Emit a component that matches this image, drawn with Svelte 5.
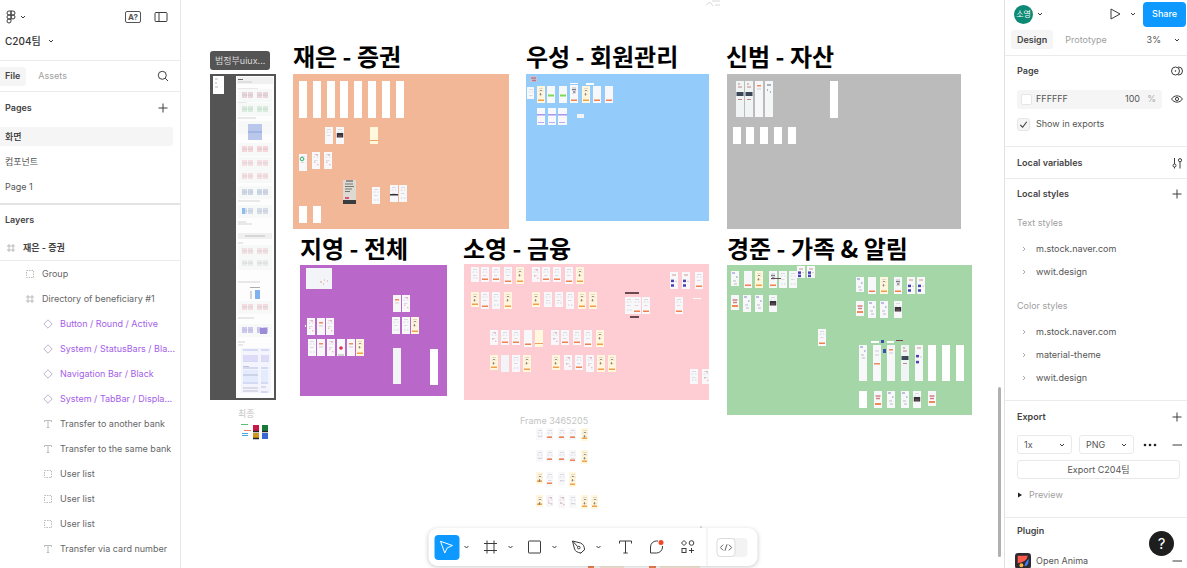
<script>
  const PAN = 181;

  // Thumbnails are "kind x y [w h]"; width and height default to one phone screen.
  const parse = (list) =>
    list.trim().split(/\s*;\s*/).filter(Boolean).map((entry) => {
      const [kind, x, y, w = 8, h = 17] = entry.split(' ');
      return { kind, x: +x, y: +y, w: +w, h: +h };
    });

  const boards = [
    { title: '재은 - 증권', tx: 293, ty: 39, x: 293, y: 74, w: 216, h: 155, fill: '#f2b796',
      cards: parse(`w 299 81 8 37;w 313 81 8 37;w 327 81 8 37;w 340 81 8 37;w 354 81 8 37;w 368 81 8 37;w 382 81 8 37;w 396 81 8 37;
        p 325 127;k 336 127;c 370 127;n 299 154;r 312 152;r 324 152;d 343 180 13 24;g 372 187;m 390 185;g 399 185;w 299 206;w 313 206`) },
    { title: '우성 - 회원관리', tx: 526, ty: 39, x: 526, y: 74, w: 183, h: 147, fill: '#93cbfa',
      cards: parse(`i 530 76 7 6;p 527 87 7 12;y 537 86;e 547 86;e 559 86;w 570 83 8 1;w 586 83 8 2;h 570 85 8 18;y 582 86;q 593 86;q 605 86;
        v 537 108;v 548 108;v 558 108 9 17;l 577 114 7 4`) },
    { title: '신범 - 자산', tx: 726, ty: 39, x: 727, y: 74, w: 234, h: 155, fill: '#bbbbbb',
      cards: parse(`a 736 81 8 36;a 745 81 8 36;t 755 81 8 36;f 765 81 8 36;w 830 81 8 37;w 733 127;w 746 127;w 760 127;w 774 127;w 788 127`) },
    { title: '지영 - 전체', tx: 300, ty: 231, x: 300, y: 265, w: 147, h: 131, fill: '#b967c9',
      cards: parse(`l 306 268 26 21;t 393 295;r 402 295;g 392 317;g 402 317;y 411 317;w 305 325 1 2;r 307 318;t 317 318;r 326 318;
        g 308 339;t 317 339;r 327 339;z 337 339;t 347 339;y 356 339;l 393 348 8 36;w 430 349 8 36`) },
    { title: '소영 - 금융', tx: 463, ty: 231, x: 464, y: 264, w: 245, h: 136, fill: '#fecdd3',
      cards: parse(`g 471 267 8 15;o 481 267 8 15;o 492 267 8 15;o 504 267;y 516 267;r 532 267 8 15;o 542 267 8 15;o 553 267 8 15;o 565 267;y 576 267;
        y 471 292 8 15;o 481 292;g 492 292;y 504 292;y 532 292 8 15;g 544 292 8 15;g 555 292 8 15;g 566 292;y 578 292;y 589 292;
        r 490 330 8 15;o 501 330 8 15;o 512 330 8 15;q 524 330;c 535 330;r 551 330 8 15;o 561 330 8 15;o 573 330 8 15;o 584 330;y 596 330;
        y 490 355 8 15;l 501 355;g 512 355;y 523 355;y 552 355 8 15;r 564 355 8 15;o 575 355 8 15;r 586 355;y 597 355;y 608 355;
        b 670 272;b 682 272;o 695 272;o 675 297;g 625 297;o 633 297;o 642 297;x 625 292 14 2;x 630 316 9 2;w 693 298 8 1;g 690 369 8 15;r 702 369 8 15`) },
    { title: '경준 - 가족 & 알림', tx: 727, ty: 231, x: 727, y: 265, w: 245, h: 150, fill: '#a5d6a7',
      cards: parse(`u 731 271 8 15;q 744 271;y 755 271;h 769 271;g 779 271;g 789 271;b 797 266 8 12;b 807 266 8 12;x 771 278 10 1;
        s 731 295 8 15;u 743 295;u 755 295;k 769 295;u 856 277 8 15;q 868 277;y 880 277;h 894 277;b 907 277;b 917 277;
        s 856 301 8 15;u 868 301;u 880 301;k 894 301;o 818 329;w 871 341 8 2;b 881 340 3 3;w 887 341 7 2;x 896 340 7 1;
        u 859 345 8 36;j 873 345 8 36;t 887 345 8 36;a 901 345 8 36;b 915 345 8 36;w 928 345 8 36;w 942 345 8 36;w 956 345 8 36;b 883 349 3 4;
        w 859 391;s 874 391;u 887 391;u 901 391;k 913 391;s 928 391 8 15`) }
  ];

  const loose = parse(`g 536 428 7 12;o 546 428 7 12;o 558 428 7 12;o 569 428 7 12;y 581 428 7 13;
    g 536 450 7 12;o 546 450 7 12;o 558 450 7 12;o 569 450 7 13;y 581 450 7 14;
    y 536 472 7 12;o 546 472 7 14;g 558 472 7 13;y 569 472 7 15;
    y 536 495 7 12;r 546 495 7 12;r 558 495 7 13;g 569 495 7 13;y 581 495 7 14;y 591 495 7 14`);

  const docs = [
    { y: 92, c: '#e9d5da' }, { y: 106, c: '#d9eddc' }, { y: 124, c: '#b9c8ea', tall: true },
    { y: 146, c: '#f5d6d9' }, { y: 160, c: '#f5dfe2' }, { y: 173, c: '#f5dfe2' },
    { y: 189, c: '#cfd9e4' }, { y: 208, c: '#d6dde8' }, { y: 248, c: '#f3e2e4' },
    { y: 260, c: '#e9edea' }, { y: 304, c: '#f3dde1' }, { y: 327, c: '#cfc8ee' }
  ];

  const pages = ['화면', '컴포넌트', 'Page 1'];
  const layers = [
    ['group', 'Group', 1], ['frame', 'Directory of beneficiary #1', 1],
    ['inst', 'Button / Round / Active', 2], ['inst', 'System / StatusBars / Bla...', 2],
    ['inst', 'Navigation Bar / Black', 2], ['inst', 'System / TabBar / Displa...', 2],
    ['text', 'Transfer to another bank', 2], ['text', 'Transfer to the same bank', 2],
    ['group', 'User list', 2], ['group', 'User list', 2], ['group', 'User list', 2],
    ['text', 'Transfer via card number', 2]
  ];
  const textStyles = ['m.stock.naver.com', 'wwit.design'];
  const colorStyles = ['m.stock.naver.com', 'material-theme', 'wwit.design'];

  const bg = { y: '#fff6dc', c: '#fff8dc', l: '#f3f4f8', d: '#dcdad2', a: '#f1f4f5', t: '#f7f7f9', f: '#f4f6f7', x: '#6a4850', i: '#c9c4d4' };
  const base = (k) => bg[k] ?? (k === 'w' ? '#ffffff' : '#f8f8fa');
</script>

{#snippet chevron()}
  <svg class="chev" viewBox="0 0 8 8" aria-hidden="true"><path d="M2 3l2 2 2-2" /></svg>
{/snippet}

{#snippet plus()}
  <svg class="ic" viewBox="0 0 12 12" aria-hidden="true"><path d="M6 1.5v9M1.5 6h9" /></svg>
{/snippet}

{#snippet thumb(c)}
  {@const k = c.kind}
  <g transform="translate({c.x} {c.y})">
    <rect width={c.w} height={c.h} fill={base(k)} />
    {#if 'goryhpkmn'.includes(k)}
      <path d="M2 2.5h4M1.5 5h2M5 5h1.5M2 8.5h3.5" stroke="#8c90a0" stroke-width="0.7" opacity="0.4" />
    {/if}
    {#if k === 'g'}<path d="M2 {c.h - 4}h1.5M5 {c.h - 4}h1.5" stroke="#a9acb8" stroke-width="0.7" opacity="0.7" />{/if}
    {#if 'oyqh'.includes(k)}<rect x="1" y={c.h - 3.5} width={c.w - 2} height="1.5" fill={k === 'y' ? '#f0a04a' : '#f08050'} />{/if}
    {#if k === 'c'}<rect y={c.h - 4} width={c.w} height="1" fill="#f0a060" />{/if}
    {#if k === 'y'}<path d="M3 4.5h2M3.5 7v2.400" stroke="#50404a" stroke-width="1.2" opacity="0.55" />{/if}
    {#if k === 'h'}<path d="M2 4.5h4M3 7h2.5" stroke="#303040" stroke-width="1.3" opacity="0.6" />{/if}
    {#if k === 'r'}<path d="M4 3h2M2 {c.h * 0.6}h1.500M5 {c.h * 0.75}h1.500" stroke="#e06070" stroke-width="1" opacity="0.55" />{/if}
    {#if k === 's'}<path d="M1.500 5h5M2 7.500h4" stroke="#c05a60" stroke-width="1.500" opacity="0.75" /><rect x="1" y={c.h - 5} width="6" height="2" fill="#f08a55" />{/if}
    {#if k === 'z'}<circle cx="4" cy="9" r="1.800" fill="#d83050" /><path d="M1 16h6" stroke="#7a9a80" stroke-width="0.7" />{/if}
    {#if k === 'i'}<path d="M1 2h5M2 4.500h4" stroke="#a85a70" stroke-width="1.500" opacity="0.7" />{/if}
    {#if k === 'k'}<rect x="0.8" y="6" width="6.400" height="4.500" fill="#33353a" /><path d="M2 9h4" stroke="#b0585a" stroke-width="0.8" />{/if}
    {#if k === 'm'}<rect y="9" width="8" height="1.5" fill="#333" />{/if}
    {#if k === 'n'}<circle cx="3" cy="5" r="1.8" fill="none" stroke="#35b070" />{/if}
    {#if k === 'e'}<rect x="1" y="8.500" width="6" height="2" fill="#7ed957" />{/if}
    {#if k === 'v'}<rect y="6" width={c.w} height="1.500" fill="#8f7ee8" opacity="0.8" /><path d="M1 14.5h6" stroke="#9a8cf0" opacity="0.7" />{/if}
    {#if k === 'a'}<rect x="0.5" y="11" width="7" height="4" fill="#3b4656" /><path d="M2 3h2M2 6h4M2 18.500h4" stroke="#b0706a" stroke-width="0.8" />{/if}
    {#if k === 't'}<rect x="2" y="4" width="4" height="1.5" fill="#f08a60" /><path d="M2 8h4" stroke="#b8bcc8" stroke-width="0.7" />{/if}
    {#if k === 'j'}<rect x="1" y="18" width="6" height="1.5" fill="#f08a60" /><path d="M2 6h4M2 10h4" stroke="#b8bcc8" stroke-width="0.7" />{/if}
    {#if k === 'f'}<path d="M2 4h4M2 9h1M5 11h1" stroke="#6a6e78" />{/if}
    {#if k === 'u'}<path d="M1 2h3M5 6h1.5" stroke="#3c48b8" stroke-width="1.2" opacity="0.65" /><path d="M2 10h3M3 13h3" stroke="#a0a4b0" stroke-width="0.7" />{/if}
    {#if k === 'b' && c.w > 5}
      {@const span = Math.min(c.h, 22)}
      <rect x="1" y={span * 0.45} width="3" height="2.500" fill="#4a42b4" /><rect x="1" y={span * 0.72} width="3" height="2.500" fill="#4a42b4" />
      <path d="M2 3h4M5.500 {span * 0.55}h1" stroke="#c08078" stroke-width="0.8" />
    {:else if k === 'b'}<rect width={c.w} height={c.h} fill="#3a50a8" />{/if}
    {#if k === 'd'}
      <rect y="20" width="13" height="4" fill="#3a3c3e" /><path d="M3 1h7" stroke="#444" /><path d="M2 4h8M2 6.500h9M2 9h7M2 11.500h5" stroke="#77756f" stroke-width="1.2" />
      <rect x="2" y="17" width="4" height="2" fill="#e05070" />
    {/if}
    {#if k === 'l' && c.w > 9}<path d="M14 14h2M18 12h1M17 16h1M21 13h1" stroke="#e09a9a" />{/if}
  </g>
{/snippet}

{#snippet layerIcon(type)}
  <svg class="licon" viewBox="0 0 10 10" aria-hidden="true">
    {#if type === 'frame'}<path d="M3 1v8M7 1v8M1 3h8M1 7h8" />
    {:else if type === 'group'}<rect x="1.5" y="1.500" width="7" height="7" stroke-dasharray="1.500 1" />
    {:else if type === 'inst'}<path d="M5 .8L9.200 5 5 9.200.8 5z" />
    {:else}<path d="M1.500 3V1.500h7V3M5 1.500v7M3.700 8.500h2.600" />{/if}
  </svg>
{/snippet}

<div class="app">
  <aside class="left">
    <header class="file-head">
      <div class="row">
        <button class="bare logo" aria-label="Main menu">
          <svg class="figma" viewBox="0 0 10 14" aria-hidden="true">
            <path d="M5 1H3a2 2 0 000 4h2zM5 1h2a2 2 0 010 4H5zM5 5H3a2 2 0 000 4h2zM5 9H3a2 2 0 102 2z" /><circle cx="7" cy="7" r="2" />
          </svg>
          {@render chevron()}
        </button>
        <span class="grow"></span>
        <button class="bare missing" aria-label="Missing fonts">A?</button>
        <button class="bare" aria-label="Toggle panel">
          <svg class="ic14" viewBox="0 0 14 14" aria-hidden="true"><rect x="1" y="2.500" width="12" height="9" rx="1" /><path d="M5 2.500v9" /></svg>
        </button>
      </div>
      <button class="bare title">C204팀 {@render chevron()}</button>
    </header>
    <div class="tabs">
      <button class="tab on">File</button>
      <button class="tab">Assets</button>
      <span class="grow"></span>
      <button class="bare" aria-label="Search">
        <svg class="ic" viewBox="0 0 12 12" aria-hidden="true"><circle cx="5.300" cy="5.300" r="4" /><path d="M8.300 8.300L11 11" /></svg>
      </button>
    </div>
    <section class="pages">
      <div class="head"><h2>Pages</h2><button class="bare" aria-label="Add page">{@render plus()}</button></div>
      {#each pages as name, i}
        <button class="page" class:on={i === 0}><span>{name}</span></button>
      {/each}
    </section>
    <section class="layers">
      <h2>Layers</h2>
      <button class="layer root">{@render layerIcon('frame')}<span>재은 - 증권</span></button>
      {#each layers as [type, name, depth]}
        <button class="layer" class:deep={depth === 2} class:inst={type === 'inst'}>{@render layerIcon(type)}<span>{name}</span></button>
      {/each}
    </section>
  </aside>

  <main class="canvas">
    <svg class="sheet" viewBox="{PAN} 0 822 568" width="822" height="568" aria-hidden="true">
      <path d="M706 5l4-3 3 4M712 1h8M715 5h5" stroke="#d8d8d8" fill="none" />
      <path d="M701 526v3" stroke="#bbb" />
      <path d="M588 567h6M649 567h7" stroke="#f08050" stroke-width="2" /><path d="M600 567h24M660 567h40" stroke="#f5d8b8" stroke-width="1" />
      <rect x="210" y="74" width="66" height="326" fill="#545454" />
      <rect x="213" y="76" width="11" height="18" fill="#fff" />
      <path d="M215 79h3M215 83h2M215 87h3" stroke="#999" stroke-width="0.7" />
      <rect x="236" y="76" width="38" height="322" fill="#fdfdfd" />
      <rect x="237" y="77" width="36" height="7" fill="#f0f0f0" />
      <path d="M238 79.500h5" stroke="#666" /><path d="M238 82h14M238 89h20M238 103h9M238 118h18M238 187h10M238 201h22M238 222h8M238 224h14M238 243h5M238 282h22M238 318h16M238 342h7M238 345h5" stroke="#bbb" stroke-width="0.6" />
      {#each docs as d}
        <rect x="238" y={d.y - 3} width="34" height="13" fill="#f7f8f8" />
        {#if d.tall}
          <rect x="248" y={d.y} width="14" height="16" fill={d.c} /><path d="M248 {d.y + 8}h14" stroke="#8da4dc" />
        {:else}
          <path d="M242 {d.y + 3}h11M257 {d.y + 3}h11" stroke={d.c} stroke-width="6" stroke-dasharray="5 1" />
          <path d="M242 {d.y + 3}h11M257 {d.y + 3}h11" stroke="#9a9fb0" stroke-width="0.5" opacity="0.5" />
        {/if}
      {/each}
      <rect x="238" y="233" width="34" height="6" fill="#f0f0f0" /><path d="M245 236h20" stroke="#aaa" stroke-width="0.7" />
      <rect x="242" y="208" width="3" height="6" fill="#8bbcf5" />
      <path d="M250 287.500h10M251 291v8" stroke="#888" stroke-width="0.7" />
      <rect x="255" y="290" width="5" height="9" fill="#7fb0f0" />
      <rect x="260" y="328" width="7" height="6" fill="#9b8bd8" />
      <rect x="241" y="348" width="30" height="45" fill="#f4f5fc" />
      <path d="M243 350h15M261 350h8M243 361h15M261 361h8M243 368h15M261 368h7M243 383h15M261 383h7M261 392h7" stroke="#b6bfec" />
      <path d="M243 358h15M261 358h8" stroke="#dcdcf8" stroke-width="6" /><path d="M243 376h15M261 376h7" stroke="#e4ebfc" stroke-width="12" />
      <path d="M243 366.500h6M243 375h15M243 388h15M261 387h5M243 391h15" stroke="#9aa0b8" stroke-width="0.6" />
      <path d="M241 424.500h7" stroke="#58c070" /><path d="M244 430.500h7" stroke="#f08060" /><path d="M242 433.500h6M242 435.500h6" stroke="#48a8e0" />
      <rect x="253" y="425" width="6" height="7" fill="#c81848" /><rect x="262" y="425" width="6" height="7" fill="#187838" />
      <rect x="253" y="433" width="6" height="6" fill="#d09820" /><rect x="262" y="433" width="6" height="6" fill="#3868d0" />
      <path d="M253 431.500h6M262 431.500h6M253 438.500h6" stroke="#202820" stroke-width="1.500" />
      {#each loose as c}{@render thumb(c)}{/each}
    </svg>

    <span class="tag" style:left="{210 - PAN}px" style:top="51px">범정부uiux...</span>
    <span class="note kr" style:left="{238 - PAN}px" style:top="406px">최종</span>
    <span class="note" style:left="{520 - PAN}px" style:top="413px">Frame 3465205</span>

    {#each boards as b}
      <h3 style:left="{b.tx - PAN}px" style:top="{b.ty}px">{b.title}</h3>
      <svg class="board" style:left="{b.x - PAN}px" style:top="{b.y}px" style:background={b.fill}
        width={b.w} height={b.h} viewBox="{b.x} {b.y} {b.w} {b.h}" role="img" aria-label={b.title}>
        {#each b.cards as c}{@render thumb(c)}{/each}
      </svg>
    {/each}

    <div class="scroll"></div>

    <div class="toolbar" role="toolbar" aria-label="Tools">
      <button class="tool on" aria-label="Move">
        <svg viewBox="0 0 16 16" aria-hidden="true"><path d="M2 2.300l12 4.200-5.200 2.300L6.300 14z" /></svg>
      </button>
      <button class="more" aria-label="Move options">{@render chevron()}</button>
      <button class="tool" aria-label="Frame"><svg viewBox="0 0 16 16" aria-hidden="true"><path d="M4.500 1.500v13M11.500 1.500v13M1.500 4.500h13M1.500 11.500h13" /></svg></button>
      <button class="more" aria-label="Frame options">{@render chevron()}</button>
      <button class="tool" aria-label="Rectangle"><svg viewBox="0 0 16 16" aria-hidden="true"><rect x="2" y="2" width="12" height="12" rx="0.500" /></svg></button>
      <button class="more" aria-label="Shape options">{@render chevron()}</button>
      <button class="tool" aria-label="Pen">
        <svg viewBox="0 0 16 16" aria-hidden="true"><path d="M2 2l8 2c3 1.200 4 4 4 6.500L10.500 14C7 13.500 5 12.500 4 10zM2 2l5.200 5.600M14.500 10.200L10 14.500" /><circle cx="8.300" cy="8.600" r="1.300" /></svg>
      </button>
      <button class="more" aria-label="Pen options">{@render chevron()}</button>
      <button class="tool wide" aria-label="Text"><svg viewBox="0 0 16 16" aria-hidden="true"><path d="M2 4.500v-2.500h12v2.500M8 2v12M5.800 14h4.400" /></svg></button>
      <button class="tool wide" aria-label="Comment">
        <svg viewBox="0 0 16 16" aria-hidden="true"><path d="M9.500 2H8a6 6 0 00-6 6v6h6a6 6 0 006-6V7" /><circle cx="12.500" cy="3.500" r="2.500" class="alert" /></svg>
      </button>
      <button class="tool wide" aria-label="Actions">
        <svg viewBox="0 0 16 16" aria-hidden="true"><path d="M4.500 1.500L7 4 4.500 6.500 2 4zM12 9v5M9.500 11.500h5" /><circle cx="12" cy="4" r="2.300" /><rect x="2.500" y="9.500" width="4" height="4" /></svg>
      </button>
      <label class="dev">
        <input type="checkbox" aria-label="Dev Mode" />
        <span class="knob"><svg viewBox="0 0 16 16" aria-hidden="true"><path d="M4.500 4.500L1 8l3.500 3.500M11.500 4.500L15 8l-3.500 3.500M9.300 4L6.700 12" /></svg></span>
      </label>
    </div>
  </main>

  <aside class="right">
    <div class="top">
      <span class="avatar">소영</span>
      {@render chevron()}
      <span class="grow"></span>
      <button class="bare" aria-label="Present"><svg class="ic" viewBox="0 0 12 12" aria-hidden="true"><path d="M2 1l9 5-9 5z" stroke-linejoin="round" /></svg></button>
      <button class="bare play-more" aria-label="Present options">{@render chevron()}</button>
      <button class="share">Share</button>
    </div>
    <div class="rtabs">
      <button class="tab on">Design</button>
      <button class="tab">Prototype</button>
      <span class="grow"></span>
      <button class="bare zoom">3% {@render chevron()}</button>
    </div>
    <section class="page-sec">
      <div class="rhead"><h2>Page</h2>
        <button class="bare" aria-label="Variable modes"><svg class="ic" viewBox="0 0 12 12" aria-hidden="true"><circle cx="4.500" cy="6" r="4" /><path d="M7 2h.5a4 4 0 010 8H7" /><circle cx="4.500" cy="6" r="0.400" /></svg></button>
      </div>
      <div class="line fill">
        <div class="field">
          <span class="swatch"></span>
          <input class="hex" aria-label="Page colour" value="FFFFFF" />
          <input class="pct" aria-label="Opacity" value="100" /><span class="unit">%</span>
        </div>
        <button class="bare" aria-label="Toggle visibility"><svg class="ic" viewBox="0 0 12 12" aria-hidden="true"><path d="M.6 6C3 1.800 9 1.800 11.400 6 9 10.200 3 10.200.6 6z" /><circle cx="6" cy="6" r="1.600" /></svg></button>
      </div>
      <label class="check"><input type="checkbox" checked /><svg viewBox="0 0 12 12" aria-hidden="true"><path d="M3 6.300L5.200 8.500 9 3.500" /></svg>Show in exports</label>
    </section>
    <section>
      <div class="rhead"><h2>Local variables</h2>
        <button class="bare" aria-label="Open variables"><svg class="ic" viewBox="0 0 12 12" aria-hidden="true"><path d="M3.500 1v6M3.500 10v1.500M9 5v6.500" /><circle cx="3.500" cy="8.500" r="1.500" /><circle cx="9" cy="3.200" r="1.600" /></svg></button>
      </div>
    </section>
    <section class="styles">
      <div class="rhead"><h2>Local styles</h2><button class="bare" aria-label="Add style">{@render plus()}</button></div>
      {#each [['Text styles', textStyles], ['Color styles', colorStyles]] as [label, items]}
        <div class="group">
          <h4>{label}</h4>
          {#each items as name}
            <button class="style"><svg viewBox="0 0 8 8" aria-hidden="true"><path d="M3 2l2 2-2 2" /></svg>{name}</button>
          {/each}
        </div>
      {/each}
    </section>
    <section class="export">
      <div class="rhead"><h2>Export</h2><button class="bare" aria-label="Add export">{@render plus()}</button></div>
      <div class="line">
        <label class="pick"><select aria-label="Scale"><option>1x</option><option>2x</option></select>{@render chevron()}</label>
        <label class="pick"><select aria-label="Format"><option>PNG</option><option>SVG</option></select>{@render chevron()}</label>
        <button class="bare dots" aria-label="Export settings"><svg class="ic14" viewBox="0 0 14 14" aria-hidden="true"><g class="solid"><circle cx="2" cy="7" r="1.300" /><circle cx="7" cy="7" r="1.300" /><circle cx="12" cy="7" r="1.300" /></g></svg></button>
        <span class="grow"></span>
        <button class="bare" aria-label="Remove export"><svg class="ic" viewBox="0 0 12 12" aria-hidden="true"><path d="M1.500 6h9.500" /></svg></button>
      </div>
      <div class="line"><button class="do-export">Export C204팀</button></div>
      <button class="bare preview"><svg viewBox="0 0 6 6" aria-hidden="true"><path d="M1 .5L5 3 1 5.500z" /></svg>Preview</button>
    </section>
    <section class="plugin">
      <h2>Plugin</h2>
      <div class="line">
        <svg class="anima" viewBox="0 0 15 15" aria-hidden="true"><rect width="15" height="15" rx="3" fill="#2d2a30" /><path d="M2.500 9.500V2.500h9.500q-1 6-9.500 7z" fill="#ff5a4a" /><path d="M12.800 5.500q.4 7-3.800 7 0-3 3.800-7z" fill="#3f7cff" /><circle cx="6" cy="11.500" r="1.800" fill="#ffb53a" /></svg>
        <span>Open Anima</span><span class="grow"></span>
        <button class="bare" aria-label="Remove plugin"><svg class="ic" viewBox="0 0 12 12" aria-hidden="true"><path d="M1.500 6h9.500" /></svg></button>
      </div>
    </section>
    <button class="help" aria-label="Help">?</button>
  </aside>
</div>

<style>
  :global(body) { margin: 0; }
  .app { display: flex; height: 100vh; overflow: hidden; background: #fff; color: #555; font: 9px/12px Inter, "Noto Sans CJK KR", sans-serif; }
  .app *, .app *::before { box-sizing: border-box; }
  h2, h3, h4 { margin: 0; }
  h2 { font-size: 9px; font-weight: 600; color: #444; }
  button, input, select { font: inherit; color: inherit; border: 0; background: none; padding: 0; margin: 0; }
  button { display: flex; align-items: center; white-space: nowrap; }
  svg { fill: none; stroke: #3c3c3c; flex: none; display: block; }
  .grow { flex: 1; }
  .chev { width: 8px; height: 8px; }
  .ic { width: 12px; height: 12px; }
  .ic14 { width: 14px; height: 14px; }
  .tab { height: 19px; padding: 0 6px; border-radius: 3px; color: #a0a0a0; }
  .tab.on { background: #f5f5f5; color: #444; font-weight: 600; }

  .left { width: 181px; flex: none; border-right: 1px solid #e8e8e8; overflow: hidden; }
  .file-head { padding: 5px 12px 7px 5px; border-bottom: 1px solid #ebebeb; }
  .row { display: flex; align-items: center; height: 24px; gap: 13px; }
  .logo { gap: 2px; }
  .figma { width: 12px; height: 14px; }
  .missing { height: 12px; padding: 0 2px; border: 1px solid #555; border-radius: 2px; font-size: 8px; font-weight: 700; }
  .title { height: 24px; gap: 6px; font-size: 10px; font-weight: 500; color: #333; }
  .tabs { display: flex; align-items: center; height: 31px; gap: 6px; padding-right: 11px; border-bottom: 1px solid #ebebeb; }
  .tabs .tab.on { padding-left: 5px; border-radius: 0 3px 3px 0; }
  .pages { padding-bottom: 4px; border-bottom: 2px solid #e4e4e4; }
  .head { display: flex; align-items: center; justify-content: space-between; height: 32px; padding: 0 11px 0 5px; }
  .page { height: 25px; width: 100%; padding-right: 7px; }
  .page span { flex: 1; text-align: left; line-height: 19px; padding-left: 5px; border-radius: 0 3px 3px 0; }
  .page.on span { background: #f5f5f5; font-weight: 500; color: #333; }
  .layers h2 { line-height: 30px; padding-left: 5px; }
  .layer { height: 25px; width: 100%; padding-left: 25px; gap: 7px; color: #666; }
  .layer.deep { padding-left: 43px; }
  .layer.inst { color: #a45ee8; }
  .layer.root { height: 26px; padding-left: 6px; font-weight: 600; color: #444; border-bottom: 1px solid #ebebeb; }
  .licon { width: 10px; height: 10px; stroke: #bbb; }
  .inst .licon { stroke: #bdb3cc; }

  .canvas { position: relative; flex: 1; overflow: hidden; background: #fff; }
  .sheet { position: absolute; left: 0; top: 0; stroke: none; }
  .board { position: absolute; stroke: none; }
  h3 { position: absolute; font: 700 24px/34px "Noto Sans CJK KR", sans-serif; color: #000; white-space: nowrap; }
  .tag { position: absolute; height: 19px; padding: 0 5px; border-radius: 3px; background: #545454; color: #d8d8d8; font-size: 9px; line-height: 19px; }
  .note { position: absolute; color: #c4c4c4; font-size: 9px; line-height: 16px; white-space: nowrap; }
  .scroll { position: absolute; right: 3px; bottom: 11px; width: 3px; height: 30%; border-radius: 2px; background: #b0b0b0; }
  .toolbar { position: absolute; left: 50%; bottom: 2px; transform: translateX(-50%); display: flex; align-items: center; height: 38px; padding-left: 6px; border-radius: 9px; background: #fff; box-shadow: 0 1px 4px rgba(0, 0, 0, 0.2); }
  .tool { width: 25px; height: 25px; border-radius: 4px; justify-content: center; }
  .tool.wide { width: 31px; }
  .tool svg { width: 16px; height: 16px; }
  .tool.on { background: #0d99ff; }
  .tool.on svg { stroke: #fff; }
  .tool .alert { fill: #f24822; stroke: none; }
  .more { width: 19px; height: 25px; padding-left: 3px; }
  .dev { display: flex; align-items: center; height: 38px; margin-left: 3px; padding: 0 10px 0 9px; border-left: 1px solid #ebebeb; }
  .dev input { position: absolute; opacity: 0; }
  .knob { width: 31px; height: 19px; border-radius: 4px; background: #f3f3f3; }
  .knob svg { width: 19px; height: 19px; padding: 2px; border: 1px solid #ddd; border-radius: 4px; background: #fff; }

  .right { position: relative; width: 183px; flex: none; border-left: 1px solid #e2e2e2; overflow: hidden; }
  .top { display: flex; align-items: center; height: 28px; padding: 0 1px 0 9px; gap: 3px; }
  .avatar { width: 19px; height: 19px; border-radius: 50%; background: #0c8a74; color: #fff; font-size: 8px; line-height: 19px; text-align: center; white-space: nowrap; }
  .play-more { padding: 0 3px 0 5px; }
  .share { height: 25px; padding: 0 9px; border-radius: 4px; background: #0d99ff; color: #fff; font-weight: 500; }
  .rtabs { display: flex; align-items: center; height: 28px; padding: 0 6px 4px 6px; gap: 6px; border-bottom: 1px solid #ebebeb; }
  .zoom { gap: 12px; }
  section { border-bottom: 1px solid #ebebeb; }
  .layers, .plugin { border: 0; }
  .page-sec { padding-bottom: 10px; }
  .rhead { display: flex; align-items: center; justify-content: space-between; height: 31px; padding: 0 4px 0 12px; }
  .page-sec .rhead, .styles .rhead { height: 30px; }
  .line { display: flex; align-items: center; height: 25px; padding: 0 4px 0 12px; gap: 7px; }
  .fill { height: 26px; gap: 9px; }
  .field { display: flex; align-items: center; flex: 1; min-width: 0; height: 19px; border-radius: 3px; background: #f5f5f5; padding-right: 6px; }
  .swatch { width: 11px; height: 11px; margin: 0 4px; border: 1px solid #e6e6e6; border-radius: 2px; background: #fff; flex: none; }
  .hex { flex: 1; width: 0; }
  .pct { width: 18px; }
  .unit { width: 13px; text-align: right; color: #aaa; }
  .check { position: relative; display: flex; align-items: center; gap: 6px; height: 24px; padding-left: 12px; }
  .check input { appearance: none; width: 13px; height: 13px; border: 1px solid #e6e6e6; border-radius: 3px; background: #f5f5f5; }
  .check svg { position: absolute; left: 12px; width: 13px; height: 13px; pointer-events: none; }
  .styles { padding-bottom: 11px; }
  .group + .group { margin-top: 9px; }
  h4 { font-size: 9px; font-weight: 400; line-height: 28px; padding-left: 12px; color: #a0a0a0; }
  .style { height: 23px; padding-left: 15px; gap: 8px; }
  .style svg { width: 8px; height: 8px; stroke: #aaa; }
  .export { padding-bottom: 10px; }
  .pick { position: relative; width: 56px; height: 19px; }
  .pick select { appearance: none; width: 100%; height: 100%; padding-left: 6px; border: 1px solid #e9e9e9; border-radius: 3px; background: #fff; }
  .pick .chev { position: absolute; right: 6px; top: 6px; pointer-events: none; }
  .dots { padding-left: 2px; }
  .solid { fill: #222; stroke: none; }
  .do-export { flex: 1; justify-content: center; height: 19px; border: 1px solid #e9e9e9; border-radius: 3px; margin-right: 3px; }
  .preview { height: 25px; padding-left: 12px; gap: 6px; color: #a0a0a0; }
  .preview svg { width: 6px; height: 6px; fill: #222; stroke: none; }
  .plugin h2 { line-height: 25px; padding-left: 12px; }
  .plugin .line { height: 36px; gap: 5px; padding-left: 10px; }
  .anima { width: 16px; height: 16px; stroke: none; }
  .help { position: absolute; right: 13px; bottom: 12px; width: 25px; height: 25px; border-radius: 50%; justify-content: center; background: #1e1e1e; color: #fff; font-size: 15px; }
</style>
